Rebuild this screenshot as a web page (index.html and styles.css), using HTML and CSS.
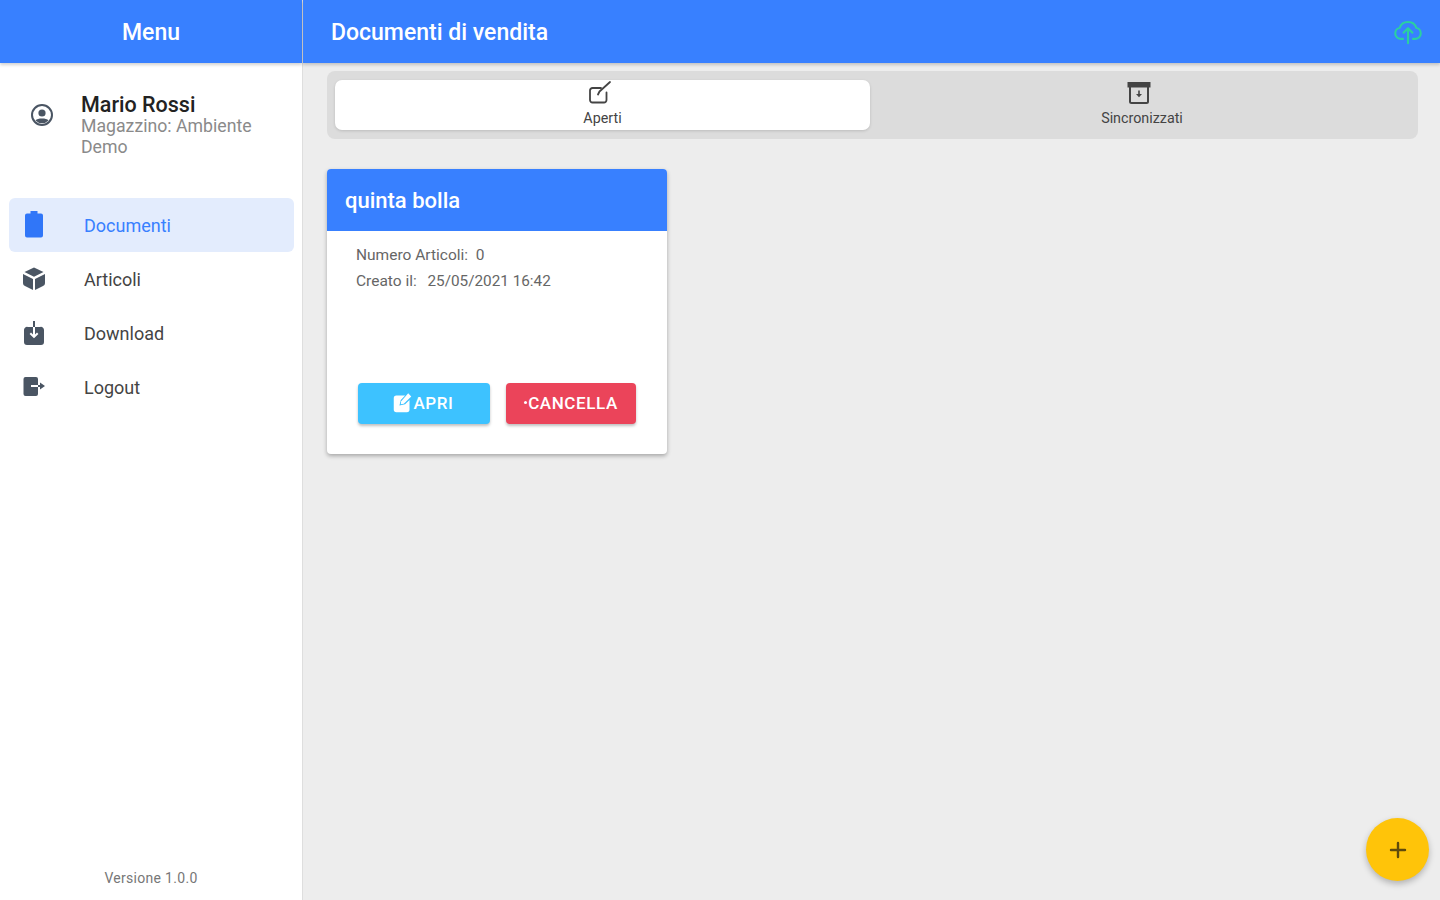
FILE: index.html
```html
<!DOCTYPE html>
<html lang="it">
<head>
  <meta charset="UTF-8">
  <title>Documenti di vendita</title>
  <link rel="stylesheet" href="styles.css">
</head>
<body>
  <div class="app">
    <!-- Menu laterale -->
    <aside class="side-menu">
      <header class="side-header">Menu</header>
      <div class="user-box">
        <svg class="user-icon" viewBox="0 0 24 24">
          <circle cx="12" cy="12" r="10" fill="none" stroke="#4a5563" stroke-width="2"/>
          <circle cx="12" cy="10" r="3.6" fill="#4a5563"/>
          <path d="M5.500 17.500c2-2.600 11-2.600 13 0a9 9 0 0 1-13 0z" fill="#4a5563"/>
        </svg>
        <div class="user-text">
          <div class="user-name">Mario Rossi</div>
          <div class="user-store">Magazzino: Ambiente Demo</div>
        </div>
      </div>
      <nav class="nav-list">
        <a class="nav-item active">
          <svg class="nav-icon" viewBox="0 0 24 24">
            <path d="M8.500-2h7v2.500h3.500A2 2 0 0 1 21 2.500v20a2 2 0 0 1-2 2H5a2 2 0 0 1-2-2v-20a2 2 0 0 1 2-2h3.500z" fill="#3076f8"/>
          </svg>
          <span>Documenti</span>
        </a>
        <a class="nav-item">
          <svg class="nav-icon" viewBox="0 0 24 24">
            <path d="M12 .5l9.500 4.600L12 9.800 2.500 5.100z" fill="#4a5563"/>
            <path d="M1 7l10 4.900v11L3 19a3 3 0 0 1-2-2.800z" fill="#4a5563"/>
            <path d="M23 7l-10 4.900v11l8-3.900a3 3 0 0 0 2-2.800z" fill="#4a5563"/>
          </svg>
          <span>Articoli</span>
        </a>
        <a class="nav-item">
          <svg class="nav-icon" viewBox="0 0 24 24">
            <path d="M11 0h2v6h-2z" fill="#4a5563"/>
            <path d="M6 6h5v7.500l-2-2-1.400 1.400L12 17.300l4.400-4.400L15 11.500l-2 2V6h5a3 3 0 0 1 4 3v12a3 3 0 0 1-3 3H5a3 3 0 0 1-3-3V9a3 3 0 0 1 4-3z" fill="#4a5563"/>
          </svg>
          <span>Download</span>
        </a>
        <a class="nav-item">
          <svg class="nav-icon" viewBox="0 0 24 24">
            <path d="M3.500 2H14a2 2 0 0 1 2 2v6H9v2h7v7a2 2 0 0 1-2 2H3.500a2 2 0 0 1-2-2V4a2 2 0 0 1 2-2z" fill="#4a5563"/>
            <path d="M18 7.500l5 3.500-5 3.500V12h-2v-2h2z" fill="#4a5563"/>
          </svg>
          <span>Logout</span>
        </a>
      </nav>
      <div class="version">Versione 1.0.0</div>
    </aside>

    <!-- Contenuto -->
    <main class="content">
      <header class="top-bar">
        <span class="top-title">Documenti di vendita</span>
        <svg class="cloud-icon" viewBox="0 0 24 24" fill="none" stroke="#2bd0a0" stroke-width="1.700" stroke-linecap="round" stroke-linejoin="round">
          <path d="M8 17.500H6a4.500 4.500 0 0 1-.6-8.900A6.800 6.800 0 0 1 12 4a6.800 6.800 0 0 1 6.600 4.600 4.500 4.500 0 0 1-.6 8.900h-2"/>
          <path d="M8.500 12.500L12 9l3.500 3.500M12 9.500V21"/>
        </svg>
      </header>

      <div class="page">
        <div class="segment">
          <button class="segment-btn selected">
            <svg class="segment-icon" viewBox="0 0 24 24" fill="none" stroke="#444" stroke-width="1.800" stroke-linecap="round" stroke-linejoin="round">
              <path d="M18.500 11.500V19a2.500 2.500 0 0 1-2.500 2.500H4.500A2.500 2.500 0 0 1 2 19V9.500A2.500 2.500 0 0 1 4.500 7H13"/>
              <path d="M10 13.500l1.500-3L22 1"/>
            </svg>
            <span>Aperti</span>
          </button>
          <button class="segment-btn">
            <svg class="segment-icon" viewBox="0 0 24 24" fill="none" stroke="#444" stroke-width="2">
              <path d="M1.500 2h21v3.500h-21z" fill="#444"/>
              <path d="M3 5.500v15A1.500 1.500 0 0 0 4.500 22h15a1.500 1.500 0 0 0 1.500-1.500v-15"/>
              <path d="M12 9.500v5" stroke-width="1.600"/>
              <path d="M9 13l3 3.200 3-3.200z" fill="#444" stroke="none"/>
            </svg>
            <span>Sincronizzati</span>
          </button>
        </div>

        <article class="doc-card">
          <h2 class="card-title">quinta bolla</h2>
          <div class="card-body">
            <p class="card-row">Numero Articoli:&nbsp; 0</p>
            <p class="card-row">Creato il:&nbsp; <span class="card-date">25/05/2021 16:42</span></p>
          </div>
          <div class="card-actions">
            <button class="btn btn-open">
              <svg class="btn-icon" viewBox="0 0 24 24">
                <path d="M5 4h10l-5 5-1.500 6.500L15 14l5-5v11a3 3 0 0 1-3 3H5a3 3 0 0 1-3-3V7a3 3 0 0 1 3-3z" fill="#fff"/>
                <path d="M18.500 1.500l3.500 3.500L13.500 13.500l-3.500.5.500-3.500z" fill="#fff"/>
              </svg>
              APRI
            </button>
            <button class="btn btn-delete"><span class="dot"></span>CANCELLA</button>
          </div>
        </article>
      </div>

      <button class="fab" aria-label="Nuovo documento">
        <svg viewBox="0 0 24 24" class="fab-icon" fill="none" stroke="#5f4a0c" stroke-width="2.400" stroke-linecap="round">
          <path d="M12 5v14M5 12h14"/>
        </svg>
      </button>
    </main>
  </div>
</body>
</html>
```

FILE: styles.css
```css
/* Base */
* {
  box-sizing: border-box;
}

html, body {
  height: 100%;
}

body {
  margin: 0;
  font-family: Roboto, "Liberation Sans", sans-serif;
  color: #444;
  background-color: #ededed;
  overflow: hidden;
}

.app {
  display: flex;
  height: 900px;
}

/* Menu laterale */
.side-menu {
  width: 303px;
  flex-shrink: 0;
  display: flex;
  flex-direction: column;
  background-color: #ffffff;
  border-right: 1px solid #dedede;
}

.side-header {
  height: 63px;
  line-height: 65px;
  text-align: center;
  font-size: 23px;
  font-weight: 500;
  color: #ffffff;
  background-color: #3880ff;
  box-shadow: 0 2px 3px rgba(0, 0, 0, 0.18);
}

.user-box {
  display: flex;
  align-items: flex-start;
  height: 135px;
  padding: 30px 20px 0 30px;
}

.user-icon {
  width: 24px;
  height: 24px;
  flex-shrink: 0;
  margin: 10px 27px 0 0;
}

.user-name {
  font-size: 21.500px;
  font-weight: 500;
  line-height: 23px;
  color: #222;
}

.user-store {
  font-size: 17.700px;
  line-height: 21px;
  color: #8a8a8a;
}

.nav-list {
  display: flex;
  flex-direction: column;
  padding: 0 8px 0 9px;
}

.nav-item {
  display: flex;
  align-items: center;
  height: 54px;
  padding-left: 13px;
  font-size: 18px;
  color: #444;
  border-radius: 6px;
}

.nav-item.active {
  color: #3880ff;
  background-color: #e3ecfd;
}

.nav-icon {
  width: 24px;
  height: 24px;
  margin-right: 38px;
  flex-shrink: 0;
  overflow: visible;
}

.version {
  margin-top: auto;
  padding-bottom: 14px;
  text-align: center;
  font-size: 14px;
  letter-spacing: 0.3px;
  color: #777;
}

/* Contenuto */
.content {
  flex: 1;
  position: relative;
  display: flex;
  flex-direction: column;
  min-width: 0;
}

.top-bar {
  height: 63px;
  display: flex;
  align-items: center;
  justify-content: space-between;
  padding: 1px 17px 0 28px;
  background-color: #3880ff;
  box-shadow: 0 2px 3px rgba(0, 0, 0, 0.18);
}

.top-title {
  font-size: 23px;
  font-weight: 500;
  color: #ffffff;
}

.cloud-icon {
  width: 30px;
  height: 30px;
}

.page {
  padding: 8px 22px 0 24px;
}

.segment {
  display: flex;
  height: 68px;
  padding: 9px 4px 9px 8px;
  background-color: #dcdcdc;
  border-radius: 8px;
}

.segment-btn {
  flex: 1;
  height: 50px;
  display: flex;
  flex-direction: column;
  align-items: center;
  padding: 1px 0 0;
  font-family: inherit;
  font-size: 14.300px;
  line-height: 16px;
  color: #444;
  background: transparent;
  border: none;
  border-radius: 7px;
}

.segment-btn.selected {
  flex: none;
  width: 535px;
  background-color: #ffffff;
  box-shadow: 0 1px 3px rgba(0, 0, 0, 0.15);
}

.segment-icon {
  width: 24px;
  height: 24px;
  margin: 0 6px 5px 0;
}

/* Card documento */
.doc-card {
  width: 340px;
  height: 285px;
  margin-top: 30px;
  display: flex;
  flex-direction: column;
  background-color: #ffffff;
  border-radius: 4px;
  box-shadow: 0 2px 4px rgba(0, 0, 0, 0.3);
  overflow: hidden;
}

.card-title {
  margin: 0;
  height: 62px;
  line-height: 64px;
  padding-left: 18px;
  font-size: 22px;
  font-weight: 500;
  color: #ffffff;
  background-color: #3880ff;
}

.card-body {
  padding: 12px 0 0 29px;
}

.card-row {
  margin: 0;
  height: 26px;
  line-height: 25px;
  font-size: 15.500px;
  color: #666;
}

.card-date {
  margin-left: 3px;
  font-size: 15.300px;
}

.card-actions {
  display: flex;
  gap: 16px;
  margin-top: auto;
  padding: 0 0 30px 31px;
}

.btn {
  height: 41px;
  display: flex;
  align-items: center;
  justify-content: center;
  padding: 0 0 2px;
  font-family: inherit;
  font-size: 17px;
  font-weight: 500;
  letter-spacing: 0.6px;
  color: #ffffff;
  border: none;
  border-radius: 4px;
  box-shadow: 0 2px 3px rgba(0, 0, 0, 0.25);
}

.btn-open {
  width: 132px;
  background-color: #3dc2ff;
}

.btn-delete {
  width: 130px;
  background-color: #eb445a;
}

.btn-icon {
  width: 21px;
  height: 21px;
  margin-left: -2px;
}

.dot {
  width: 3px;
  height: 3px;
  margin-right: 1px;
  border-radius: 50%;
  background-color: #ffffff;
}

/* Bottone flottante */
.fab {
  position: absolute;
  right: 11px;
  bottom: 19px;
  width: 63px;
  height: 63px;
  display: flex;
  align-items: center;
  justify-content: center;
  padding: 0;
  border: none;
  border-radius: 50%;
  background-color: #ffc409;
  box-shadow: 0 3px 6px rgba(0, 0, 0, 0.25);
}

.fab-icon {
  width: 24px;
  height: 24px;
}
```
